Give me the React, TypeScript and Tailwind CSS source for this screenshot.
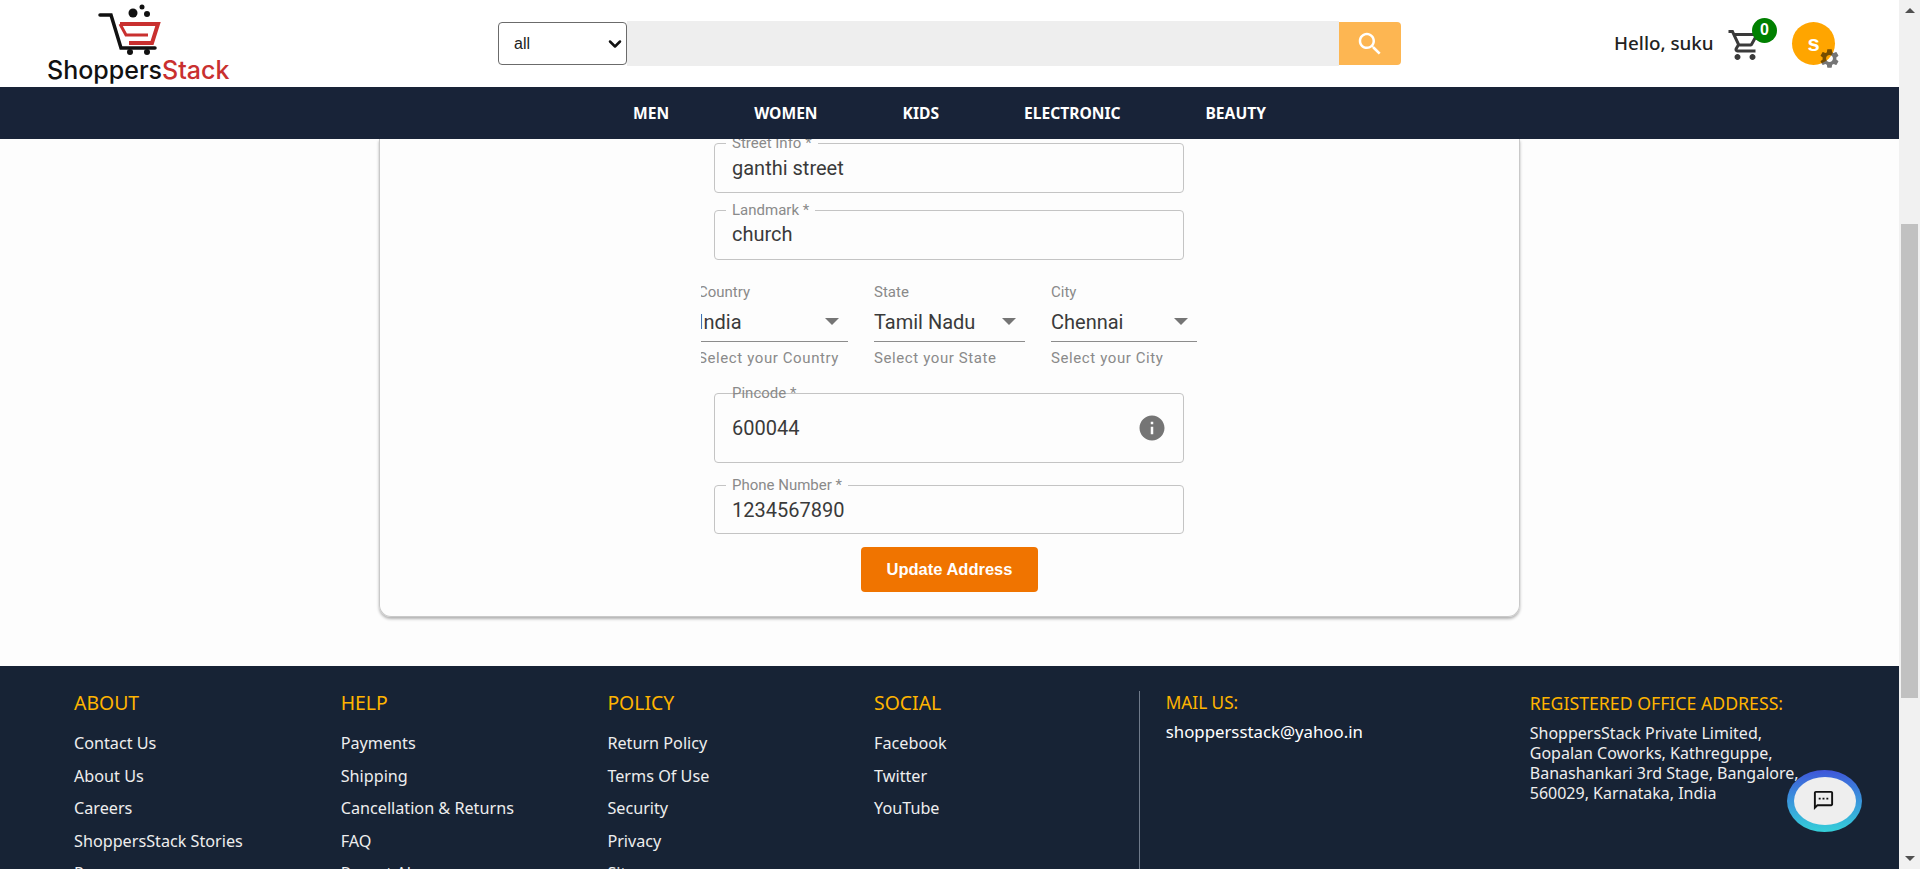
import React from 'react';
import { ChevronDown } from 'lucide-react';

const navItems = ['MEN', 'WOMEN', 'KIDS', 'ELECTRONIC', 'BEAUTY'];

const footerColumns = [
  { title: 'ABOUT', links: ['Contact Us', 'About Us', 'Careers', 'ShoppersStack Stories', 'Press'] },
  { title: 'HELP', links: ['Payments', 'Shipping', 'Cancellation & Returns', 'FAQ', 'Report Abuse'] },
  { title: 'POLICY', links: ['Return Policy', 'Terms Of Use', 'Security', 'Privacy', 'Sitemap'] },
  { title: 'SOCIAL', links: ['Facebook', 'Twitter', 'YouTube'] },
];

const selects = [
  { label: 'Country', value: 'India', helper: 'Select your Country', width: 'w-[147px]', clip: true },
  { label: 'State', value: 'Tamil Nadu', helper: 'Select your State', width: 'w-[151px]', clip: false },
  { label: 'City', value: 'Chennai', helper: 'Select your City', width: 'w-[146px]', clip: false },
];

const Logo = () => (
  <div className="flex flex-col items-start w-[181px]">
    <svg className="ml-[50px]" width="64" height="52" viewBox="0 0 64 52">
      <circle cx="35" cy="9" r="4.5" fill="#111" />
      <circle cx="44" cy="3" r="2.5" fill="#111" />
      <circle cx="49" cy="10" r="3" fill="#111" />
      <path d="M2 11h11l10 33h34" fill="none" stroke="#111" strokeWidth="3.5" strokeLinecap="round" />
      <path d="M22 20H60L54 39H31" fill="none" stroke="#c9302f" strokeWidth="4" />
      <path d="M22 20L28 31H50" fill="none" stroke="#c9302f" strokeWidth="3" />
      <circle cx="32" cy="48" r="3" fill="#111" />
      <circle cx="49" cy="48" r="3" fill="#111" />
    </svg>
    <span className="mt-[1px] -ml-[1px] font-['Inter',sans-serif] text-[25px] leading-[26px] font-medium text-[#111] whitespace-nowrap">
      Shoppers<span className="text-[#c9302f]">Stack</span>
    </span>
  </div>
);

const OutlinedField = ({
  label,
  value,
  height,
  adornment,
  strikeLabel,
}: {
  label: string;
  value: string;
  height: string;
  adornment?: boolean;
  strikeLabel?: boolean;
}) => (
  <div className={`relative ${height} w-[470px] rounded border border-[#c4c4c4] flex items-center justify-between pl-[17px] pr-[16px]`}>
    <span className="text-[20px] text-[#3a3a3a] leading-6">{value}</span>
    {adornment && (
      <svg width="30" height="30" viewBox="0 0 24 24" fill="#757575">
        <path d="M12 2C6.48 2 2 6.48 2 12s4.48 10 10 10 10-4.48 10-10S17.52 2 12 2zm1 15h-2v-6h2v6zm0-8h-2V7h2v2z" />
      </svg>
    )}
    <span
      className={`absolute left-[11px] -top-[10px] px-[6px] text-[15px] leading-[18px] text-[#8a8a8a] whitespace-nowrap ${
        strikeLabel ? '' : 'bg-[#fdfdfd]'
      }`}
    >
      {label}
    </span>
  </div>
);

const App: React.FC = () => {
  return (
    <div className="flex h-[869px] w-full overflow-hidden font-['Roboto',sans-serif]">
      <div className="flex flex-col flex-1 min-w-0 h-full relative">
        {/* Header */}
        <header className="h-[87px] shrink-0 bg-white flex items-center">
          <div className="ml-[48px] w-[450px] shrink-0 -mt-[1px]">
            <Logo />
          </div>
          <div className="flex items-center w-[903px] shrink-0">
            <div className="w-[129px] h-[43px] rounded border border-[#6b6b6b] bg-white flex items-center justify-between pl-[15px] pr-[1px] shrink-0">
              <span className="font-['Liberation_Sans',sans-serif] text-[16px] text-[#222]">all</span>
              <ChevronDown size={20} strokeWidth={3} className="text-[#111]" />
            </div>
            <div className="h-[45px] w-[712px] bg-[#eeeeee] shrink-0" />
            <div className="w-[62px] h-[43px] bg-[#fdb652] rounded-r flex items-center justify-center shrink-0">
              <svg width="30" height="30" viewBox="0 0 24 24" fill="#fff">
                <path d="M15.5 14h-.79l-.28-.27C15.41 12.59 16 11.11 16 9.5 16 5.91 13.09 3 9.5 3S3 5.91 3 9.5 5.91 16 9.5 16c1.61 0 3.09-.59 4.23-1.57l.27.28v.79l5 4.99L20.49 19l-4.99-5zm-6 0C7.01 14 5 11.99 5 9.5S7.01 5 9.5 5 14 7.01 14 9.5 11.99 14 9.5 14z" />
              </svg>
            </div>
          </div>
          <span className="ml-[213px] w-[100px] font-['Noto_Sans',sans-serif] text-[18.8px] font-medium text-[#222] whitespace-nowrap">Hello, suku</span>
          <div className="relative ml-[13px] w-[36px] h-[36px] mt-[2px] shrink-0">
            <svg width="36" height="36" viewBox="0 0 24 24" fill="#3a3a3a">
              <path d="M15.55 13c.75 0 1.41-.41 1.75-1.03l3.58-6.49c.37-.66-.11-1.48-.87-1.48H5.21l-.94-2H1v2h2l3.6 7.59-1.35 2.44C4.52 15.37 5.48 17 7 17h12v-2H7l1.1-2h7.45zM6.16 6h12.15l-2.76 5H8.53L6.16 6zM7 18c-1.1 0-1.99.9-1.99 2S5.9 22 7 22s2-.9 2-2-.9-2-2-2zm10 0c-1.1 0-1.99.9-1.99 2s.89 2 1.99 2 2-.9 2-2-.9-2-2-2z" />
            </svg>
            <span className="absolute left-[25px] -top-[9px] w-[25px] h-[25px] rounded-full bg-[#008000] text-white text-[16px] font-bold font-['Liberation_Sans',sans-serif] flex items-center justify-center">
              0
            </span>
          </div>
          <div className="relative ml-[29px] w-[43px] h-[43px] rounded-full bg-[#ffa500] shrink-0 flex items-center justify-center text-white text-[22px] leading-none font-bold font-['Liberation_Sans',sans-serif]">
            s
            <svg className="absolute left-[26px] top-[25px]" width="23" height="23" viewBox="0 0 24 24" fill="rgba(0,0,0,0.54)">
              <path d="M19.14 12.94c.04-.3.06-.61.06-.94 0-.32-.02-.64-.07-.94l2.03-1.58c.18-.14.23-.41.12-.61l-1.92-3.32c-.12-.22-.37-.29-.59-.22l-2.39.96c-.5-.38-1.03-.7-1.62-.94l-.36-2.54c-.04-.24-.24-.41-.48-.41h-3.84c-.24 0-.43.17-.47.41l-.36 2.54c-.59.24-1.13.57-1.62.94l-2.39-.96c-.22-.08-.47 0-.59.22L2.74 8.87c-.12.21-.08.47.12.61l2.03 1.58c-.05.3-.09.63-.09.94s.02.64.07.94l-2.03 1.58c-.18.14-.23.41-.12.61l1.92 3.32c.12.22.37.29.59.22l2.39-.96c.5.38 1.03.7 1.62.94l.36 2.54c.05.24.24.41.48.41h3.84c.24 0 .44-.17.47-.41l.36-2.54c.59-.24 1.13-.56 1.62-.94l2.39.96c.22.08.47 0 .59-.22l1.92-3.32c.12-.22.07-.47-.12-.61l-2.01-1.58zM12 15.6c-1.98 0-3.6-1.62-3.6-3.6s1.62-3.6 3.6-3.6 3.6 1.62 3.6 3.6-1.62 3.6-3.6 3.6z" />
            </svg>
          </div>
        </header>

        {/* Category nav */}
        <nav className="h-[52px] shrink-0 bg-[#182338] flex items-center justify-center gap-[85px] pt-[1px]">
          {navItems.map(item => (
            <span key={item} className="font-['Noto_Sans',sans-serif] text-[15.6px] font-bold text-white">
              {item}
            </span>
          ))}
        </nav>

        {/* Address form, scrolled so the card top is out of view */}
        <main className="h-[527px] shrink-0 bg-[#fdfdfd] overflow-hidden">
          <div className="ml-[379px] w-[1141px] h-[478px] rounded-b-xl border border-t-0 border-[#c9c9c9] shadow-[0_2px_3px_rgba(0,0,0,0.3)] pt-[4px] pl-[334px]">
            <OutlinedField label="Street Info *" value="ganthi street" height="h-[50px]" />
            <div className="mt-[17px]">
              <OutlinedField label="Landmark *" value="church" height="h-[50px] pb-[2px]" />
            </div>
            <div className="flex gap-[26px] -ml-[13px] mt-[22px]">
              {selects.map(s => (
                <div key={s.label} className={`${s.width} overflow-hidden shrink-0`}>
                  <div className={`text-[15px] leading-5 text-[#8a8a8a] ${s.clip ? '-ml-[3px]' : ''}`}>{s.label}</div>
                  <div className="h-[40px] border-b border-[#8c8c8c] flex items-center justify-between">
                    <span className={`text-[20px] text-[#3a3a3a] ${s.clip ? '-ml-[3px]' : ''}`}>{s.value}</span>
                    <span className="mr-[9px] w-0 h-0 border-x-[7px] border-x-transparent border-t-[7px] border-t-[#757575]" />
                  </div>
                  <div className={`mt-[6px] text-[15px] leading-5 tracking-[0.6px] text-[#8a8a8a] whitespace-nowrap ${s.clip ? '-ml-[3px]' : ''}`}>
                    {s.helper}
                  </div>
                </div>
              ))}
            </div>
            <div className="mt-[25px]">
              <OutlinedField label="Pincode *" value="600044" height="h-[70px]" adornment strikeLabel />
            </div>
            <div className="mt-[22px]">
              <OutlinedField label="Phone Number *" value="1234567890" height="h-[49px]" />
            </div>
            <button className="block mt-[13px] ml-[147px] w-[177px] h-[45px] rounded bg-[#f07400] text-white text-[16.5px] font-bold font-['Liberation_Sans',sans-serif]">
              Update Address
            </button>
          </div>
        </main>

        {/* Footer, cut by the viewport */}
        <footer className="flex-1 min-h-0 bg-[#172335] overflow-hidden flex font-['Noto_Sans',sans-serif] pl-[74px] pt-[25px]">
          {footerColumns.map(col => (
            <div key={col.title} className="w-[266.7px] shrink-0">
              <div className="text-[19.4px] leading-6 text-[#ffb400]">{col.title}</div>
              <ul className="mt-[18px] flex flex-col gap-[12.5px]">
                {col.links.map(link => (
                  <li key={link} className="text-[16.2px] leading-5 text-[#eeeeee] whitespace-nowrap">
                    {link}
                  </li>
                ))}
              </ul>
            </div>
          ))}
          <div className="w-[1px] bg-[#6f7a8a] ml-[-2px] shrink-0" />
          <div className="ml-[26px] w-[364px] shrink-0">
            <div className="text-[17.2px] leading-6 text-[#ffb400]">MAIL US:</div>
            <div className="mt-[7px] text-[16.8px] leading-5 text-white">shoppersstack@yahoo.in</div>
          </div>
          <div className="shrink-0">
            <div className="text-[17.7px] leading-6 text-[#ffb400] whitespace-nowrap">REGISTERED OFFICE ADDRESS:</div>
            <div className="mt-[8px] text-[16px] leading-5 text-[#eeeeee] whitespace-nowrap">
              ShoppersStack Private Limited,
              <br />
              Gopalan Coworks, Kathreguppe,
              <br />
              Banashankari 3rd Stage, Bangalore,
              <br />
              560029, Karnataka, India
            </div>
          </div>
        </footer>

        {/* Floating chat button */}
        <div className="absolute left-[1787px] top-[770px] w-[75px] h-[62px] rounded-[50%] bg-gradient-to-b from-[#3f55d9] to-[#35cfd8] flex items-center justify-center">
          <div className="w-[62px] h-[48px] rounded-[50%] bg-[#eeeeee] flex items-center justify-center">
            <svg className="mr-[2px] mb-[1px]" width="23" height="23" viewBox="0 0 24 24" fill="#111">
              <path d="M20 2H4c-1.1 0-2 .9-2 2v18l4-4h14c1.1 0 2-.9 2-2V4c0-1.1-.9-2-2-2zm0 14H5.2L4 17.2V4h16v12zM7 9h2v2H7zm4 0h2v2h-2zm4 0h2v2h-2z" />
            </svg>
          </div>
        </div>
      </div>

      {/* Scrollbar */}
      <div className="w-[21px] shrink-0 bg-[#f1f1f1] flex flex-col items-center">
        <div className="h-[21px] flex items-center justify-center">
          <span className="w-0 h-0 border-x-[5px] border-x-transparent border-b-[5px] border-b-[#505050]" />
        </div>
        <div className="mt-[203px] w-[17px] h-[474px] bg-[#c1c1c1]" />
        <div className="mt-auto h-[21px] flex items-center justify-center">
          <span className="w-0 h-0 border-x-[5px] border-x-transparent border-t-[5px] border-t-[#505050]" />
        </div>
      </div>
    </div>
  );
};

export default App;
